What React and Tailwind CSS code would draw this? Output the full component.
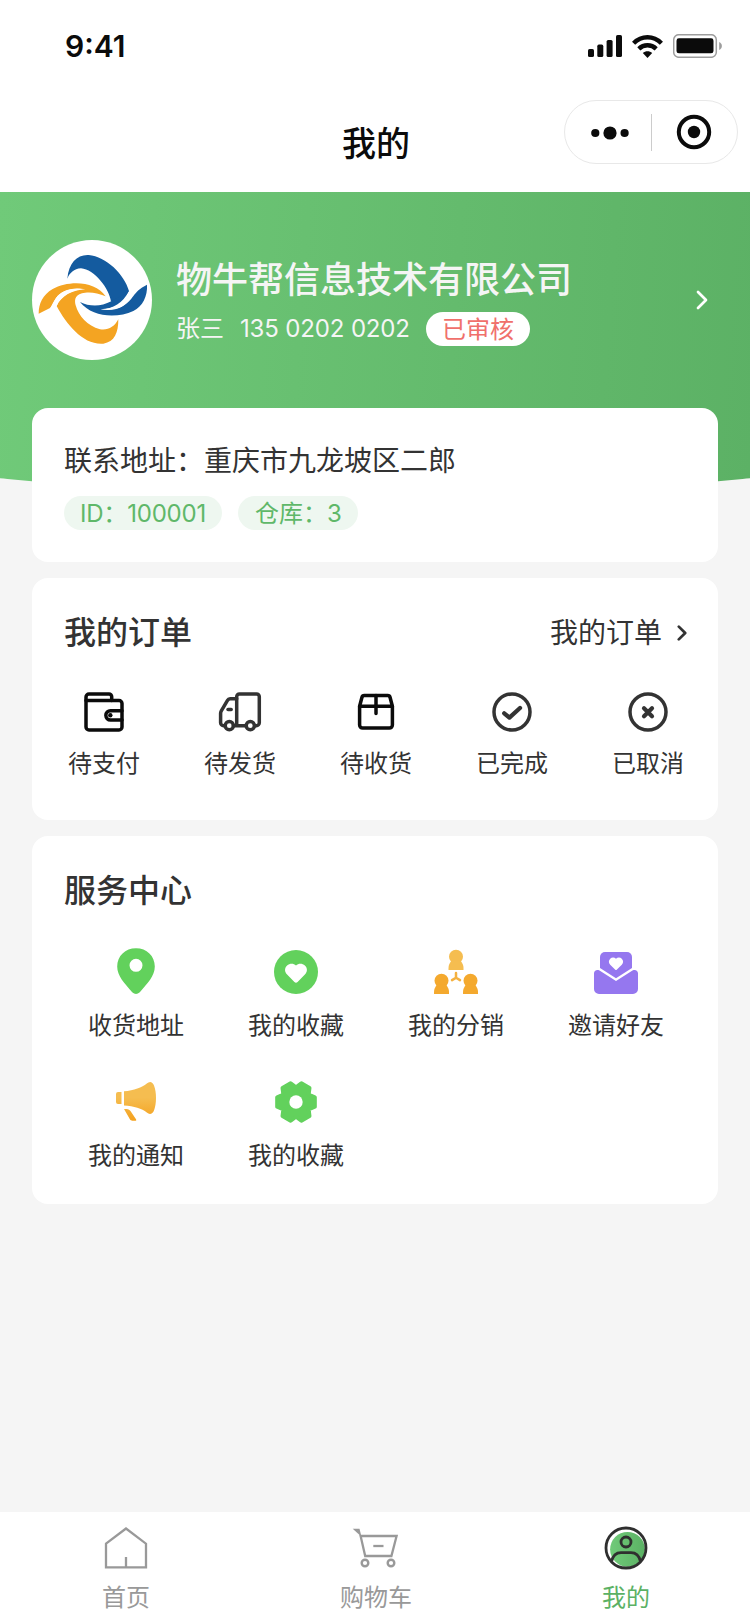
import React, { useState } from 'react';

const CellularIcon = () => (
  <svg className="w-[34px] h-[22px]" viewBox="0 0 34 22" fill="#0b0b0b">
    <rect x="0" y="14" width="6" height="8" rx="1.6" />
    <rect x="9.3" y="9.6" width="6" height="12.4" rx="1.6" />
    <rect x="18.6" y="5" width="6" height="17" rx="1.6" />
    <rect x="28" y="0" width="6" height="22" rx="1.6" />
  </svg>
);

const WifiIcon = () => (
  <svg className="w-[31px] h-[23px]" viewBox="0 0 31 23" fill="none" stroke="#0b0b0b">
    <path d="M1.6 8.2C9.5.2 21.5.2 29.4 8.2" strokeWidth="4.4" />
    <path d="M6.8 13.8c4.9-4.7 12.500-4.700 17.400 0" strokeWidth="4.400" />
    <path d="M10.800 18c2.700-2.500 6.700-2.500 9.400 0l-4.700 4.900z" fill="#0b0b0b" stroke="none" />
  </svg>
);

const BatteryIcon = () => (
  <svg className="w-[50px] h-[24px]" viewBox="0 0 50 24">
    <rect x="0.7" y="0.7" width="42.6" height="22.6" rx="5" fill="none" stroke="#9d9d9d" strokeWidth="1.5" />
    <rect x="3.5" y="4.3" width="37" height="15" rx="2.4" fill="#0b0b0b" />
    <path d="M46.200 8c3.600 1.500 3.600 6.500 0 8z" fill="#9d9d9d" />
  </svg>
);

const CompanyLogo = () => (
  <svg className="w-[120px] h-[120px]" viewBox="96 150 360 360">
    <g fill="#145b9f">
      <path d="M202 266C206 218 232 193 266 195C318 199 374 254 387 303C376 320 356 334 333 335C328 296 283 238 243 235C222 236 209 249 202 266Z" />
      <path d="M240 336C268 350 302 351 334 334L387 303C368 340 340 356 302 358C330 361 350 358 368 348C402 330 396 306 441 284C443 318 428 349 400 363C350 386 276 382 240 336Z" />
    </g>
    <g fill="#f4a422">
      <path d="M116 371C116 342 128 314 158 297C206 270 286 272 317 319C290 306 262 305 246 310C222 317 224 334 227 346C236 378 262 408 300 418C324 422 343 411 355 388C355 428 344 456 310 461C250 466 200 404 170 348C182 318 214 300 248 298C212 292 182 305 168 324C159 336 157 347 150 354Z" />
    </g>
    <path d="M170 348C184 318 216 300 256 298C214 290 182 303 168 324C160 336 158 345 151 353Z" fill="#fff" />
    <path d="M302 358C346 356 371 340 387 305L392 308C388 325 382 340 364 351C348 360 324 362 302 358Z" fill="#fff" />
  </svg>
);

const Chevron = ({ className, strokeWidth }) => (
  <svg className={className} viewBox="0 0 12 20" fill="none" stroke="currentColor" strokeWidth={strokeWidth} strokeLinecap="round" strokeLinejoin="round">
    <path d="M2 2l8 8-8 8" />
  </svg>
);

const Icon = ({ children, ...props }) => (
  <svg className="w-12 h-12 shrink-0" viewBox="0 0 48 48" fill="none" {...props}>
    {children}
  </svg>
);

const lineProps = { strokeWidth: 3.5, strokeLinecap: 'round', strokeLinejoin: 'round' };

const WalletIcon = () => (
  <Icon stroke="#0b0b0b" {...lineProps}>
    <path d="M6 12.6V9a3 3 0 0 1 3-3h20a2.7 2.7 0 0 1 2.7 2.7v3.9" />
    <path d="M6 12.6V39a3 3 0 0 0 3 3h30a3 3 0 0 0 3-3V15.6a3 3 0 0 0-3-3z" />
    <path d="M42 22.7H30.5a4.6 4.6 0 0 0 0 9.3H42" />
    <circle cx="30.3" cy="27.3" r="2.2" fill="#0b0b0b" stroke="none" />
  </Icon>
);

const TruckIcon = () => (
  <Icon stroke="#333" {...lineProps}>
    <path d="M20.7 37.7V8.7A2.7 2.7 0 0 1 23.4 6h17.2a2.7 2.7 0 0 1 2.7 2.7v26a3 3 0 0 1-3 3h-1.6M30.2 37.7H17.4" />
    <path d="M20.7 10.8h-6.5a3 3 0 0 0-2.7 1.6L5.300 22.800a5 5 0 0 0-.7 2.500v9.400a3 3 0 0 0 3 3h1.600" />
    <path d="M12 21.400h3.200" />
    <circle cx="13.300" cy="37.700" r="4.100" />
    <circle cx="34.300" cy="37.700" r="4.100" />
  </Icon>
);

const BoxIcon = () => (
  <Icon stroke="#0b0b0b" {...lineProps}>
    <path d="M12.300 7.600h23.400a2.500 2.500 0 0 1 2.400 1.900l2.300 8.800v18.800a3 3 0 0 1-3 3H10.600a3 3 0 0 1-3-3V18.300l2.300-8.800a2.500 2.500 0 0 1 2.400-1.900z" />
    <path d="M7.600 18.300h32.800M24 7.600v18" />
  </Icon>
);

const DoneIcon = () => (
  <Icon stroke="#333" {...lineProps}>
    <circle cx="24" cy="24" r="18" />
    <path d="M16.200 25.300l5.200 4.300L32 20" strokeWidth="4.300" />
  </Icon>
);

const CancelIcon = () => (
  <Icon stroke="#333" {...lineProps}>
    <circle cx="24" cy="24" r="18" />
    <path d="M20 20.200l8 8M28 20.200l-8 8" strokeWidth="4.200" />
  </Icon>
);

const PinIcon = () => (
  <Icon fill="#62d15c">
    <path fillRule="evenodd" d="M24 .3C13.300.3 5.200 8 5.200 18.500c0 9.500 7.500 17 15 25.700q3.800 3.600 7.600 0c7.500-8.700 15-16.200 15-25.700C42.800 8 34.700.3 24 .3zM24 10.800a6.500 6.500 0 1 1 0 13a6.500 6.500 0 0 1 0-13z" />
  </Icon>
);

const FavoriteIcon = () => (
  <Icon>
    <circle cx="24" cy="24" r="22" fill="#62d15c" />
    <path d="M24 17.400c2.600-2.300 6.400-2.200 8.900.2 2.700 2.600 2.700 6.300 0 9l-7.300 7.300q-1.600 1.500-3.200 0l-7.300-7.300c-2.700-2.700-2.700-6.400 0-9 2.500-2.400 6.300-2.500 8.900-.2z" fill="#fff" />
  </Icon>
);

const Person = ({ x, y, fill }) => (
  <g transform={`translate(${x} ${y})`} fill={fill}>
    <circle cx="0" cy="0" r="7" />
    <path d="M-4.5 4h9c2 2.500 3 4.500 3 7.300V13.300H-7.500V11.300C-7.500 8.500-6.500 6.500-4.500 4z" />
  </g>
);

const DistributeIcon = () => (
  <Icon>
    <Person x={24} y={8.7} fill="#f5bd50" />
    <Person x={9.5} y={32.7} fill="#f4a92e" />
    <Person x={38.5} y={32.7} fill="#f4a92e" />
    <path d="M24 25v4.700l-4 2.400M24 29.700l4 2.400" stroke="#f4b140" strokeWidth="2.500" strokeLinecap="round" />
  </Icon>
);

const InviteIcon = () => (
  <Icon fill="#9577ef">
    <path d="M13 4h22a5 5 0 0 1 5 5v11L24 30.200 8 20V9a5 5 0 0 1 5-5z" />
    <path d="M7.500 22.400L24 33l16.500-10.600c3-1.300 5.500.4 5.500 3V41a5 5 0 0 1-5 5H7a5 5 0 0 1-5-5V25.400c0-2.600 2.500-4.300 5.500-3z" />
    <path d="M24 10.700c1.700-1.500 4.200-1.500 5.800.1 1.800 1.800 1.700 4.100 0 5.900l-5.100 5.100q-.7.600-1.400 0l-5.100-5.100c-1.700-1.800-1.800-4.100 0-5.900 1.600-1.600 4.100-1.600 5.800-.1z" fill="#fff" />
  </Icon>
);

const NoticeIcon = () => (
  <Icon fill="url(#horn)">
    <defs>
      <linearGradient id="horn" x1="0" y1="4" x2="0" y2="43" gradientUnits="userSpaceOnUse">
        <stop offset="0.4" stopColor="#f5bd50" />
        <stop offset="1" stopColor="#f4a11e" />
      </linearGradient>
    </defs>
    <path d="M6 14h3.500v12H6a2 2 0 0 1-2-2v-8a2 2 0 0 1 2-2z" />
    <path d="M12 13.300C22 12.500 30 9.500 34.800 5.500c2.800-2.600 5.800-1.800 7.200 2 2.700 6.500 2.700 18.500 0 25-1.400 3.500-4.400 4.600-7.200 2C30 30.500 22 28.300 12 27.500z" />
    <path d="M12 31c3.200 0 5.300.2 6.500 2l5.500 8.200c.6 1.200.2 1.500-1 1.500h-2.600c-1.200 0-1.800-.4-2.500-1.400z" />
  </Icon>
);

// six wide teeth, one every 60 degrees
const gearPoints = [0, 60, 120, 180, 240, 300]
  .flatMap((a) => [
    [a - 30, 14.8],
    [a - 23, 16.2],
    [a - 14, 19.4],
    [a + 14, 19.4],
    [a + 23, 16.2],
  ])
  .map(([a, r]) => {
    const rad = (a * Math.PI) / 180;
    return `${(24 + r * Math.cos(rad)).toFixed(2)},${(24 + r * Math.sin(rad)).toFixed(2)}`;
  })
  .join(' ');

const SettingsIcon = () => (
  <Icon>
    <polygon points={gearPoints} fill="#62d15c" stroke="#62d15c" strokeWidth="4" strokeLinejoin="round" />
    <circle cx="24" cy="24" r="6.7" fill="#fff" />
  </Icon>
);

const HomeIcon = () => (
  <Icon stroke="#999" strokeWidth="2.3">
    <path d="M4 19.700L24 4.500l20 15.200v23.700H4zM24 33v10" />
  </Icon>
);

const CartIcon = () => (
  <Icon stroke="#999" strokeWidth="2.3">
    <path d="M8.600 12h36L39.400 32H13.200z" />
    <path d="M.7 4.800h6.800l2 8z" fill="#999" stroke="none" />
    <path d="M21.300 22h10.200" />
    <circle cx="13" cy="39" r="3.300" strokeWidth="2.400" />
    <circle cx="39" cy="39" r="3.300" strokeWidth="2.400" />
  </Icon>
);

const MineIcon = () => (
  <Icon stroke="#2f2f2f" strokeWidth="2.8">
    <defs>
      <linearGradient id="mine" x1="0" y1="0" x2="1" y2="0">
        <stop offset="0" stopColor="#70ca79" />
        <stop offset="1" stopColor="#5bb164" />
      </linearGradient>
    </defs>
    <circle cx="25.500" cy="25.300" r="17.400" fill="url(#mine)" stroke="none" />
    <circle cx="24" cy="24" r="20" />
    <circle cx="24" cy="18" r="5" />
    <path d="M9.500 37.500c1.500-6.500 4.500-8.800 9.500-8.800h10c5 0 8 2.300 9.500 8.800" />
  </Icon>
);

const orders = [
  { label: '待支付', icon: WalletIcon },
  { label: '待发货', icon: TruckIcon },
  { label: '待收货', icon: BoxIcon },
  { label: '已完成', icon: DoneIcon },
  { label: '已取消', icon: CancelIcon },
];

const services = [
  { label: '收货地址', icon: PinIcon },
  { label: '我的收藏', icon: FavoriteIcon },
  { label: '我的分销', icon: DistributeIcon },
  { label: '邀请好友', icon: InviteIcon },
  { label: '我的通知', icon: NoticeIcon },
  { label: '我的收藏', icon: SettingsIcon },
];

const tabs = [
  { key: 'home', label: '首页', icon: HomeIcon },
  { key: 'cart', label: '购物车', icon: CartIcon },
  { key: 'mine', label: '我的', icon: MineIcon },
];

const App = () => {
  const [activeTab, setActiveTab] = useState('mine');

  return (
    <div className="w-[750px] h-[1624px] flex flex-col overflow-hidden bg-[#f5f5f5] text-[#333] font-['Inter','Noto_Sans_CJK_SC',sans-serif]">
      {/* Status bar */}
      <div className="h-[88px] shrink-0 bg-white flex items-start justify-between pl-[65px] pr-[27px] pt-[34px]">
        <span className="text-[30px] leading-6 font-semibold text-[#0b0b0b]">9:41</span>
        <div className="flex items-center gap-[10px]">
          <CellularIcon />
          <WifiIcon />
          <BatteryIcon />
        </div>
      </div>

      {/* Nav bar */}
      <div className="h-[104px] shrink-0 bg-white grid grid-cols-[1fr_auto_1fr] items-start pt-3 pr-3">
        <span />
        <h1 className="pl-[14px] pt-6 text-[34px] leading-[40px] font-medium text-[#0b0b0b]">我的</h1>
        <div className="justify-self-end w-[174px] h-16 rounded-full border border-[#e8e8e8] flex items-center">
          <button type="button" className="w-[86px] flex items-center justify-center pt-[2px] pl-[3px]">
            <svg className="w-[38px] h-[14px]" viewBox="0 0 38 14" fill="#0b0b0b">
              <circle cx="4.3" cy="7" r="4.1" />
              <circle cx="19" cy="7" r="6.6" />
              <circle cx="33.6" cy="7" r="4.1" />
            </svg>
          </button>
          <span className="w-px h-[37px] bg-[#ccc]" />
          <button type="button" className="flex-1 flex items-center justify-center pr-px">
            <svg className="w-9 h-9" viewBox="0 0 36 36">
              <circle cx="18" cy="18" r="15.2" fill="none" stroke="#0b0b0b" strokeWidth="4" />
              <circle cx="18" cy="18" r="6.2" fill="#0b0b0b" />
            </svg>
          </button>
        </div>
      </div>

      {/* Profile header */}
      <div className="h-[305px] shrink-0 pt-12 pl-8 pr-[42px] bg-[linear-gradient(94deg,#70ca79_0%,#5cb165_100%)] [clip-path:circle(3750px_at_375px_-3445px)]">
        <div className="flex items-center">
          <div className="w-[120px] h-[120px] rounded-full bg-white overflow-hidden">
            <CompanyLogo />
          </div>
          <div className="ml-6 pt-[3px] flex-1 text-[#f5f5f5]">
            <h2 className="text-[36px] leading-[44px] font-medium">物牛帮信息技术有限公司</h2>
            <div className="mt-[10px] flex items-center h-[34px] text-2xl leading-[36px]">
              <span>张三</span>
              <span className="ml-4 w-[170px] whitespace-nowrap tracking-[-0.15px]">135 0202 0202</span>
              <span className="ml-4 h-[34px] px-4 rounded-full bg-white text-[#f0706b]">已审核</span>
            </div>
          </div>
          <Chevron className="w-3 h-5 text-white" strokeWidth={2.7} />
        </div>
      </div>

      <div className="relative -mt-[89px] ml-8 w-[686px] flex-1 flex flex-col gap-4">
        {/* Address */}
        <section className="h-[154px] rounded-2xl bg-white px-8 pt-[33px]">
          <p className="text-[28px] leading-10">联系地址：重庆市九龙坡区二郎</p>
          <div className="mt-[15px] flex gap-4 text-2xl leading-[36px] text-[#5fb869]">
            <span className="w-[158px] h-[34px] pl-4 rounded-full bg-[#eef7f0] whitespace-nowrap tracking-[-0.2px]">ID：100001</span>
            <span className="w-[120px] h-[34px] pl-[17px] rounded-full bg-[#eef7f0] whitespace-nowrap">仓库：3</span>
          </div>
        </section>

        {/* Orders */}
        <section className="h-[242px] rounded-2xl bg-white pl-8 pr-[31px] pt-[33px]">
          <div className="flex items-center justify-between">
            <h3 className="text-[32px] leading-[44px] font-medium">我的订单</h3>
            <button type="button" className="flex items-center text-[28px] leading-10">
              我的订单
              <Chevron className="ml-[15px] w-[10px] h-4" strokeWidth={3.4} />
            </button>
          </div>
          <div className="mt-[33px] w-[624px] flex justify-between">
            {orders.map(({ label, icon: OrderIcon }) => (
              <div key={label} className="w-20 flex flex-col items-center">
                <OrderIcon />
                <span className="mt-[11px] text-2xl leading-[34px]">{label}</span>
              </div>
            ))}
          </div>
        </section>

        {/* Services */}
        <section className="h-[368px] rounded-2xl bg-white pt-[33px]">
          <h3 className="pl-8 text-[32px] leading-[44px] font-medium">服务中心</h3>
          <div className="mt-[35px] ml-6 w-[640px] grid grid-cols-4 gap-y-[37px]">
            {services.map(({ label, icon: ServiceIcon }, index) => (
              <div key={index} className="h-[93px] flex flex-col items-center">
                <ServiceIcon />
                <span className="mt-[13px] text-2xl leading-[34px]">{label}</span>
              </div>
            ))}
          </div>
        </section>
      </div>

      {/* Tab bar */}
      <nav className="h-28 shrink-0 bg-white grid grid-cols-3 pt-3 pl-px -mr-px">
        {tabs.map(({ key, label, icon: TabIcon }) => (
          <button key={key} type="button" onClick={() => setActiveTab(key)} className="flex flex-col items-center">
            <TabIcon />
            <span className={`mt-[9px] text-2xl leading-[34px] ${activeTab === key ? 'text-[#5bb164]' : 'text-[#999]'}`}>
              {label}
            </span>
          </button>
        ))}
      </nav>
    </div>
  );
};

export default App;
